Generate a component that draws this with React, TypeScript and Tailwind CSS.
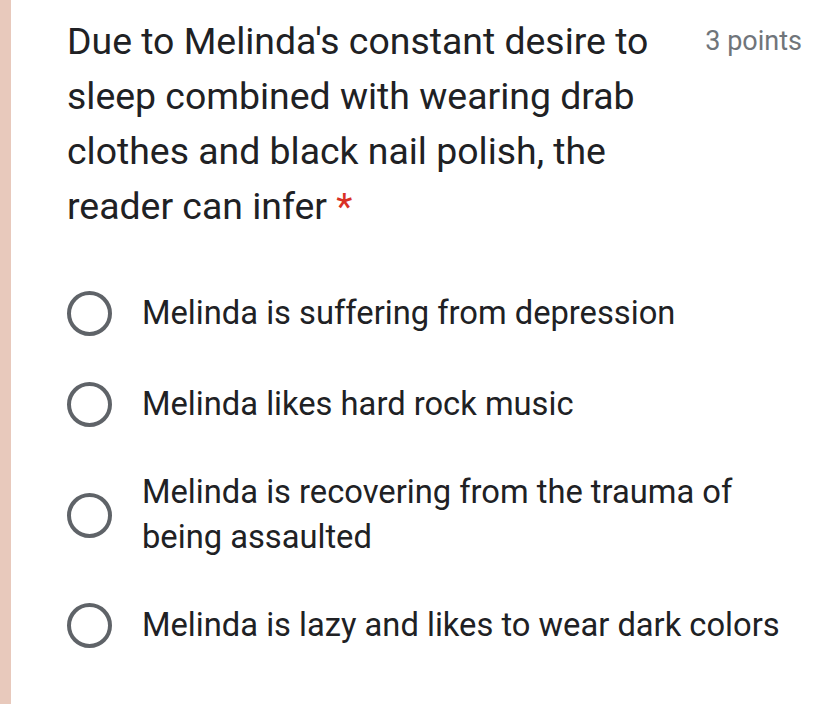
import React from "react";

function Radio() {
  return (
    <div className="w-[45px] h-[45px] rounded-full border-[4.5px] border-[#5f6368] shrink-0" />
  );
}

function Option({ text, className }: { text: string; className?: string }) {
  return (
    <div className={"flex items-center " + (className ?? "")}>
      <Radio />
      <div className="ml-[30px] w-[660px] text-[32.7px] leading-[45px] text-[#202124]">{text}</div>
    </div>
  );
}

export default function App() {
  return (
    <div className="flex w-[826px] h-[704px] bg-white" style={{ fontFamily: "Roboto, 'Liberation Sans', sans-serif" }}>
      <div className="w-[11px] shrink-0 bg-[#e8c9bc]" />
      <div className="flex-1 pl-[56px] pr-[25px] pt-[14px]">
        <div className="flex justify-between items-start">
          <div className="w-[610px] text-[37.4px] leading-[55px] text-[#202124]">
            Due to Melinda's constant desire to sleep combined with wearing drab clothes and black nail polish, the reader can infer{" "}
            <span className="text-[#d93025]">*</span>
          </div>
          <div className="text-[27px] leading-[55px] text-[#70757a] whitespace-nowrap">3 points</div>
        </div>
        <div className="mt-[57px] flex flex-col">
          <Option text="Melinda is suffering from depression" />
          <Option text="Melinda likes hard rock music" className="mt-[46px]" />
          <Option text="Melinda is recovering from the trauma of being assaulted" className="mt-[43px]" />
          <Option text="Melinda is lazy and likes to wear dark colors" className="mt-[43px]" />
        </div>
      </div>
    </div>
  );
}
